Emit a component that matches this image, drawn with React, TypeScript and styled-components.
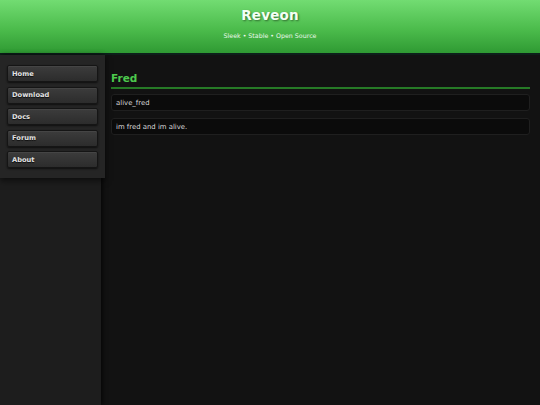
import React from 'react';
import styled, { createGlobalStyle } from 'styled-components';

const GlobalStyle = createGlobalStyle`
  html, body {
    margin: 0;
    padding: 0;
    height: 100%;
    background: #121212;
  }
  #root {
    height: 100%;
  }
  * {
    box-sizing: border-box;
  }
`;

const Page = styled.div`
  display: flex;
  flex-direction: column;
  height: 100%;
  font-family: "DejaVu Sans", Verdana, sans-serif;
  color: #dcdcdc;
`;

const Header = styled.header`
  height: 55px;
  flex-shrink: 0;
  display: flex;
  flex-direction: column;
  align-items: center;
  background: linear-gradient(to bottom, #72dc72 0%, #4cbc4c 55%, #2f9a33 100%);
  border-bottom: 2px solid #0d1f1a;
`;

const SiteTitle = styled.h1`
  margin: 7px 0 0;
  font-size: 13.5px;
  font-weight: bold;
  color: #f4fff4;
  letter-spacing: 0.2px;
  text-shadow: 1px 1px 2px rgba(0, 0, 0, 0.45);
`;

const Tagline = styled.div`
  margin-top: 9px;
  font-size: 6.3px;
  color: #eaf8ea;
`;

const Body = styled.div`
  flex: 1;
  display: flex;
  min-height: 0;
`;

const LeftColumn = styled.aside`
  width: 101px;
  flex-shrink: 0;
  background: #1d1d1d;
  position: relative;
  z-index: 1;
  box-shadow: 2px 0 4px rgba(0, 0, 0, 0.6);
`;

const SidePanel = styled.nav`
  width: 105px;
  padding: 10px 7px 10px;
  display: flex;
  flex-direction: column;
  gap: 4.5px;
  background: #252525;
  box-shadow: 0 3px 6px rgba(0, 0, 0, 0.55);
`;

const NavButton = styled.a`
  display: flex;
  align-items: center;
  height: 17px;
  padding-left: 4px;
  font-size: 6.7px;
  font-weight: bold;
  color: #e2e2e2;
  text-decoration: none;
  border: 1px solid #151515;
  border-radius: 2px;
  background: linear-gradient(to bottom, #3c3c3c 0%, #2c2c2c 100%);
  box-shadow: 0 1px 2px rgba(0, 0, 0, 0.6), inset 0 1px 0 rgba(255, 255, 255, 0.05);
  text-shadow: 0 1px 1px rgba(0, 0, 0, 0.8);
`;

const Main = styled.main`
  flex: 1;
  padding: 17px 10px 0 10px;
  background: #121212;
`;

const PageTitle = styled.h2`
  margin: 0;
  padding-bottom: 3px;
  font-size: 10.5px;
  font-weight: bold;
  color: #4dc94d;
  border-bottom: 2px solid #267a26;
`;

const Field = styled.div`
  margin-top: 5px;
  height: 17px;
  padding-left: 4px;
  display: flex;
  align-items: center;
  font-size: 6.9px;
  color: #d8d8d8;
  background: #0b0b0b;
  border: 1px solid #1f1f1f;
  border-radius: 3px;

  & + & {
    margin-top: 7px;
  }
`;

const navItems = ['Home', 'Download', 'Docs', 'Forum', 'About'];

const App: React.FC = () => {
  return (
    <>
      <GlobalStyle />
      <Page>
        <Header>
          <SiteTitle>Reveon</SiteTitle>
          <Tagline>Sleek • Stable • Open Source</Tagline>
        </Header>
        <Body>
          <LeftColumn>
            <SidePanel>
              {navItems.map(item => (
                <NavButton key={item} href="#">{item}</NavButton>
              ))}
            </SidePanel>
          </LeftColumn>
          <Main>
            <PageTitle>Fred</PageTitle>
            <Field>alive_fred</Field>
            <Field>im fred and im alive.</Field>
          </Main>
        </Body>
      </Page>
    </>
  );
};

export default App;
